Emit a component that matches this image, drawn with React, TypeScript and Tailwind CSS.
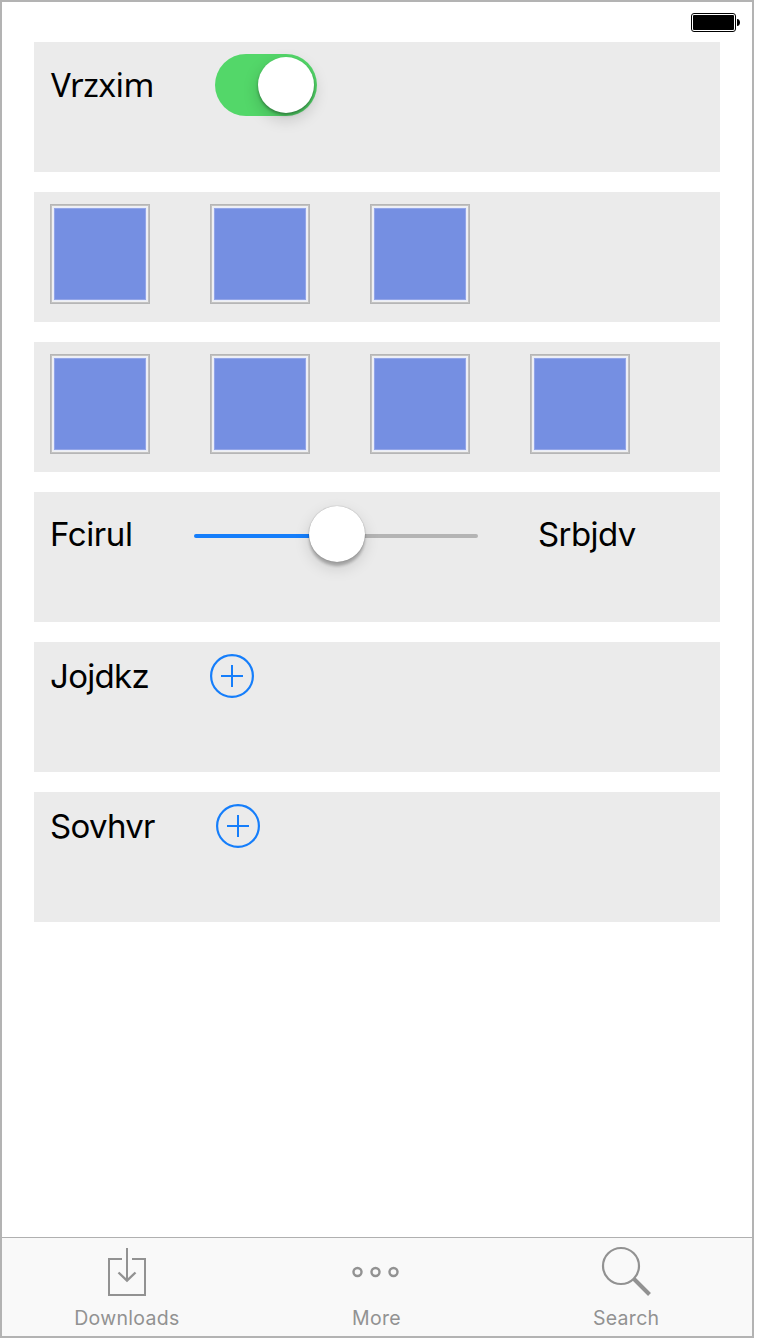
import type { ReactNode } from "react";

function Row({ children }: { children?: ReactNode }) {
  return (
    <section className="flex h-[130px] items-start gap-[60px] bg-[#ebebeb] px-4 pt-3">
      {children}
    </section>
  );
}

function Label({ className, children }: { className: string; children: ReactNode }) {
  return (
    <span className={`shrink-0 whitespace-nowrap text-[33px] text-black ${className}`}>
      {children}
    </span>
  );
}

function Battery() {
  return (
    <svg width="50" height="19" viewBox="0 0 50 19" role="img" aria-label="Battery">
      <rect x="0.5" y="0.5" width="44" height="18" rx="2.5" fill="none" stroke="#000" />
      <rect x="2" y="2" width="41" height="15" rx="1" />
      <path d="M46 6c2 .2 3 1.500 3 3.500s-1 3.300-3 3.500z" />
    </svg>
  );
}

function Toggle() {
  return (
    <div role="switch" aria-checked="true" className="flex h-[62px] w-[102px] items-center justify-end rounded-full bg-[#53d769] pr-[3px]">
      <div className="size-14 rounded-full bg-white shadow-[0_6px_16px_rgba(0,0,0,0.18),0_2px_3px_rgba(0,0,0,0.32)]" />
    </div>
  );
}

function Slider() {
  return (
    <div role="slider" aria-valuenow={50} className="flex h-[60px] w-[284px] items-center">
      <div className="mt-1 h-1 w-[115px] rounded-l-full bg-[#157efb]" />
      <div className="z-10 size-14 rounded-full bg-white shadow-[0_6px_16px_rgba(0,0,0,0.14),0_4px_3px_rgba(0,0,0,0.24),0_0_1px_rgba(0,0,0,0.4)]" />
      <div className="mt-1 h-1 flex-1 rounded-r-full bg-[#b4b4b4]" />
    </div>
  );
}

function Swatches({ count }: { count: number }) {
  return (
    <Row>
      {Array.from({ length: count }, (_, i) => (
        <div key={i} className="size-[100px] shrink-0 border border-[#b6b6b6]">
          <div className="size-full border border-[#c2c2c2]">
            <div className="size-full border border-[#f0f0f0]">
              <div className="size-full border border-[#e9edfb]">
                <div className="size-full border border-[#93a5e7] bg-[#758fe2]" />
              </div>
            </div>
          </div>
        </div>
      ))}
    </Row>
  );
}

function AddIcon() {
  return (
    <svg width="44" height="44" viewBox="0 0 44 44" fill="none" stroke="#157efb" strokeWidth="2.200">
      <circle cx="22" cy="22" r="20.900" />
      <path d="M11 22h22M22 11v22" strokeWidth="2" />
    </svg>
  );
}

function Tab({ icon, children }: { icon: ReactNode; children: ReactNode }) {
  return (
    <div className="flex flex-1 flex-col items-center">
      <div className="flex h-[68px] items-center">{icon}</div>
      <span className="whitespace-nowrap text-[19.5px] leading-6 tracking-[0.3px] text-[#929292]">{children}</span>
    </div>
  );
}

export default function App() {
  return (
    <div className="h-[1340px] w-[760px] bg-white font-['Inter','Liberation_Sans',sans-serif]">
      <main className="flex h-[1338px] w-[754px] flex-col border-2 border-[#b3b3b3] bg-white">
        <header className="flex h-10 justify-end pr-[11px] pt-[11px]">
          <Battery />
        </header>
        <div className="flex flex-1 flex-col gap-5 pl-8 pr-8">
          <Row>
            <Label className="w-[105px] pl-px font-['Noto_Sans','Open_Sans',sans-serif] leading-[61px] tracking-[-0.4px]">Vrzxim</Label>
            <Toggle />
          </Row>
          <Swatches count={3} />
          <Swatches count={4} />
          <Row>
            <Label className="w-[84px] leading-[60px] tracking-[-0.4px]">Fcirul</Label>
            <Slider />
            <Label className="leading-[60px] tracking-[-0.6px]">Srbjdv</Label>
          </Row>
          <Row>
            <Label className="w-[100px] leading-[44px] tracking-[-0.7px]">Jojdkz</Label>
            <AddIcon />
          </Row>
          <Row>
            <Label className="w-[106px] leading-[44px] tracking-[-0.7px]">Sovhvr</Label>
            <AddIcon />
          </Row>
        </div>
        <nav className="flex h-[99px] border-t border-[#b0b0b0] bg-[#f9f9f9] pr-px">
          <Tab
            icon={
              <svg width="38" height="68" viewBox="0 0 38 68" fill="none" stroke="#929292" strokeWidth="2">
                <path d="M14 21H1v36h36V21H24M19 10v33" />
                <path d="M10.500 34.500l8.500 8 8.500-8" strokeWidth="2.400" />
              </svg>
            }
          >
            Downloads
          </Tab>
          <Tab
            icon={
              <svg width="50" height="68" viewBox="0 0 50 68" fill="none" stroke="#929292" strokeWidth="2.400">
                <circle cx="5.500" cy="34" r="4" />
                <circle cx="23.500" cy="34" r="4" />
                <circle cx="41.500" cy="34" r="4" />
              </svg>
            }
          >
            More
          </Tab>
          <Tab
            icon={
              <svg width="50" height="68" viewBox="0 0 50 68" fill="none" stroke="#929292">
                <circle cx="20" cy="28" r="18" strokeWidth="2.200" />
                <path d="M33 41l15.500 15.500" strokeWidth="4" />
              </svg>
            }
          >
            Search
          </Tab>
        </nav>
      </main>
    </div>
  );
}
